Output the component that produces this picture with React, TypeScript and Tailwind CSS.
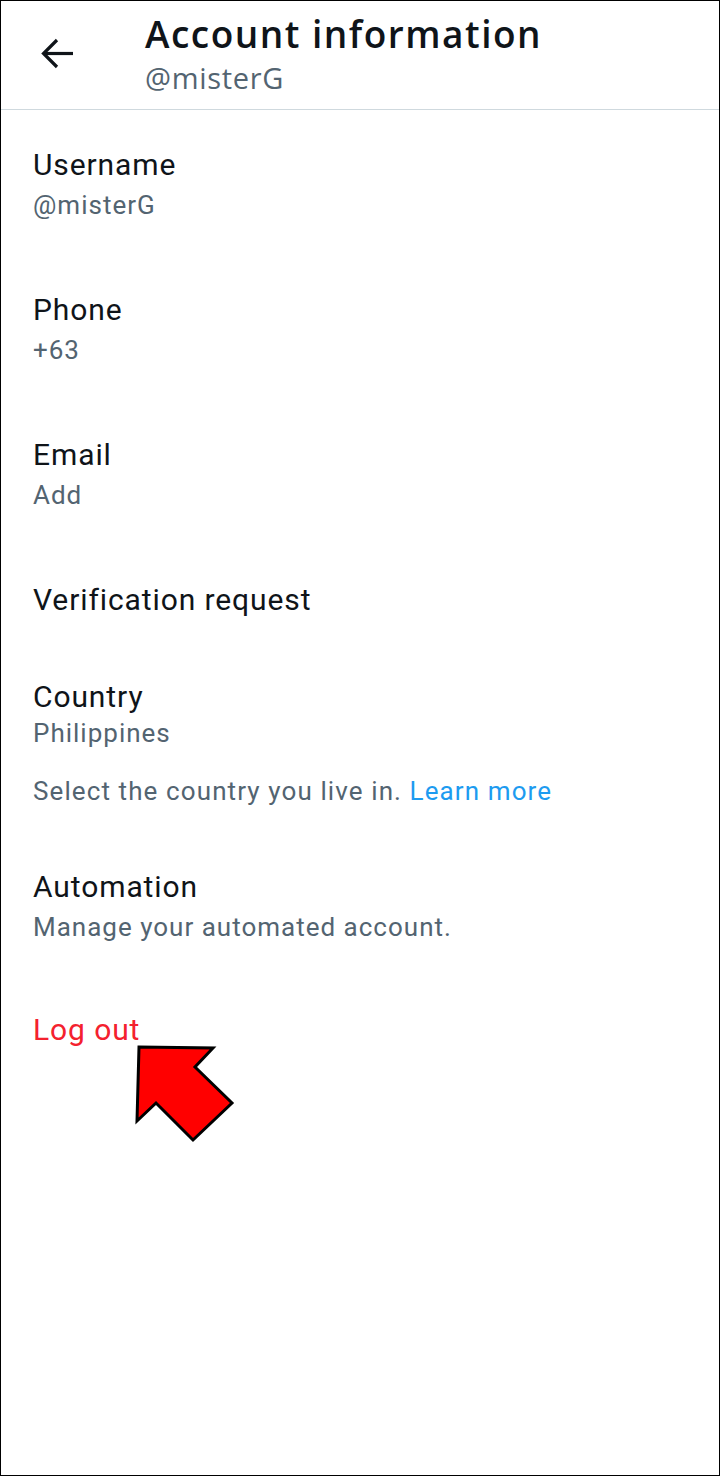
import React from "react";

const roboto = { fontFamily: "Roboto, 'Liberation Sans', sans-serif" } as const;

function Row({
  title,
  value,
  mt,
}: {
  title: string;
  value?: string;
  mt: string;
}) {
  return (
    <div className={`${mt} flex flex-col`}>
      <div className="text-[30px] leading-[40px] tracking-[0.9px] text-[#0f1419]">{title}</div>
      {value && (
        <div className="text-[26px] leading-[40px] tracking-[1px] text-[#536471]">{value}</div>
      )}
    </div>
  );
}

export default function App() {
  return (
    <div className="relative w-[720px] h-[1476px] bg-white border border-black overflow-hidden" style={roboto}>
      {/* Header */}
      <div className="h-[109px] border-b border-[#cfd9de] flex items-start">
        <div className="ml-[38px] mt-[35px] w-[36px] h-[36px]">
          <svg viewBox="0 0 36 36" width="36" height="36" fill="none" stroke="#0f1419" strokeWidth="3.2" strokeLinecap="butt" strokeLinejoin="miter">
            <path d="M34 17.5 H5" />
            <path d="M18 4 L4.5 17.5 L18 31" />
          </svg>
        </div>
        <div className="ml-[70px] pt-[11px] flex flex-col" style={{ fontFamily: "'Open Sans', 'Liberation Sans', sans-serif" }}>
          <div className="text-[37px] leading-[44px] font-semibold tracking-[1.5px] text-[#0f1419]">Account information</div>
          <div className="mt-[4px] text-[29px] leading-[36px] tracking-[0.7px] text-[#536471]">@misterG</div>
        </div>
      </div>

      {/* Body */}
      <div className="pl-[32px] flex flex-col">
        <Row mt="mt-[35px]" title="Username" value="@misterG" />
        <Row mt="mt-[65px]" title="Phone" value="+63" />
        <Row mt="mt-[65px]" title="Email" value="Add" />
        <Row mt="mt-[65px]" title="Verification request" />
        <div className="mt-[57px] flex flex-col">
          <div className="text-[30px] leading-[40px] tracking-[0.9px] text-[#0f1419]">Country</div>
          <div className="text-[26px] leading-[32px] tracking-[1px] text-[#536471]">Philippines</div>
          <div className="mt-[22px] text-[26px] leading-[40px] tracking-[1.1px] text-[#536471]">
            Select the country you live in. <span className="text-[#1d9bf0]">Learn more</span>
          </div>
        </div>
        <Row mt="mt-[56px]" title="Automation" value="Manage your automated account." />
        <div className="mt-[63px] text-[30px] leading-[40px] tracking-[0.9px] text-[#f4212e]">Log out</div>
      </div>

      {/* Annotation arrow */}
      <svg
        className="absolute left-[129px] top-[1039px]"
        width="110"
        height="110"
        viewBox="130 1040 110 110"
      >
        <polygon
          points="139,1047 213,1048 195,1067 232,1103 193,1140 156,1103 137,1121"
          fill="#ff0000"
          stroke="#000000"
          strokeWidth="3"
          strokeLinejoin="miter"
        />
      </svg>
    </div>
  );
}
